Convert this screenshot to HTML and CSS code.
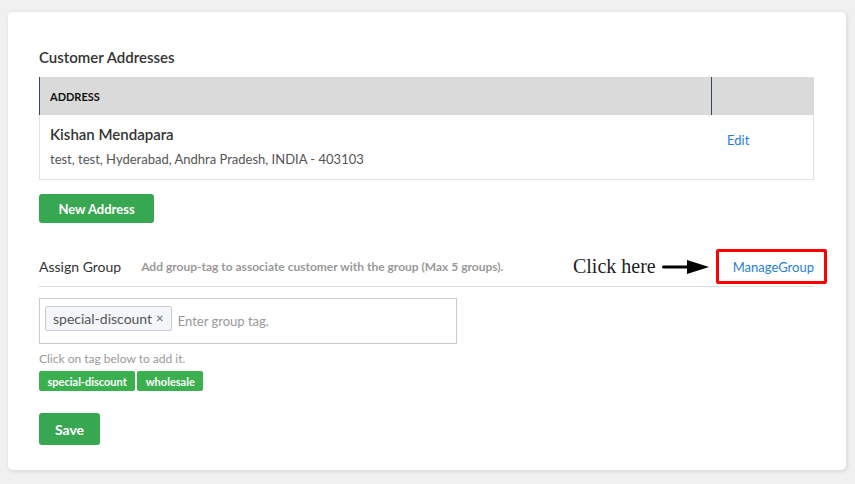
FILE: index.html
```html
<!DOCTYPE html>
<html lang="en">
  <head>
    <meta charset="UTF-8" />
    <meta name="viewport" content="width=device-width, initial-scale=1.0" />
    <title>Customer</title>
    <link rel="stylesheet" href="styles.css">
  </head>
  <body>
    <div class="card">
      <h2 class="section-title">Customer Addresses</h2>

      <table class="address-table">
        <thead>
          <tr>
            <th class="col-address">ADDRESS</th>
            <th class="col-action"></th>
          </tr>
        </thead>
        <tbody>
          <tr>
            <td>
              <div class="address-name">Kishan Mendapara</div>
              <div class="address-line">test, test, Hyderabad, Andhra Pradesh, INDIA - 403103</div>
            </td>
            <td class="col-action"><a href="#" class="link">Edit</a></td>
          </tr>
        </tbody>
      </table>

      <button class="btn btn-new">New Address</button>

      <!-- グループ割り当て -->
      <div class="group-row">
        <span class="group-label">Assign Group</span>
        <span class="group-hint">Add group-tag to associate customer with the group (Max 5 groups).</span>
        <span class="spacer"></span>
        <span class="click-note">Click here</span>
        <svg class="arrow" width="47" height="14" viewBox="0 0 47 14">
          <rect x="0" y="5.5" width="27" height="3" rx="1.5" fill="#000" />
          <polygon points="25,0 47,7 25,14" fill="#000" />
        </svg>
        <span class="highlight-box"><a href="#" class="link">ManageGroup</a></span>
      </div>

      <div class="tag-input">
        <span class="chip">special-discount <span class="chip-x">×</span></span>
        <span class="placeholder">Enter group tag.</span>
      </div>

      <div class="tag-help">Click on tag below to add it.</div>
      <div class="tag-list">
        <span class="tag">special-discount</span>
        <span class="tag">wholesale</span>
      </div>

      <button class="btn btn-save">Save</button>
    </div>
  </body>
</html>
```

FILE: styles.css
```css
body {
  font-family: 'Lato', 'Liberation Sans', sans-serif;
  margin: 0;
  padding: 12px 9px 14px 8px;
  background-color: #f0f0f0;
  color: #333;
}

.card {
  background-color: white;
  border-radius: 5px;
  box-shadow: 1px 1px 4px rgba(0, 0, 0, 0.12);
  padding: 36px 32px 25px 31px;
}

.section-title {
  margin: 0 0 11px;
  font-size: 15px;
  line-height: 18px;
  font-weight: 600;
  color: #333;
}

/* アドレステーブル */
.address-table {
  width: 100%;
  border-collapse: collapse;
}

.address-table th {
  height: 38px;
  padding: 0 10px;
  background-color: #dadada;
  text-align: left;
  font-size: 11px;
  font-weight: 700;
  color: #111;
}

.address-table th.col-address {
  border-left: 1px solid #34495e;
  border-right: 1px solid #34495e;
}

.address-table th.col-action {
  width: 82px;
}

.address-table td {
  padding: 9px 10px 10px;
  border-bottom: 1px solid #e2e2e2;
  vertical-align: middle;
}

.address-table td:first-child {
  border-left: 1px solid #e2e2e2;
}

.address-table td.col-action {
  border-right: 1px solid #e2e2e2;
  padding-top: 14px;
  padding-left: 16px;
  vertical-align: top;
}

.address-name {
  font-size: 15px;
  line-height: 20px;
  font-weight: 600;
  color: #333;
  margin-bottom: 5px;
}

.address-line {
  font-size: 13px;
  line-height: 20px;
  color: #555;
}

.link {
  color: #1f7fd2;
  font-size: 13px;
  text-decoration: none;
}

.btn {
  display: block;
  border: none;
  border-radius: 3px;
  background-color: #38a751;
  color: white;
  font-family: inherit;
  font-weight: 700;
  cursor: pointer;
}

.btn-new {
  margin-top: 14px;
  width: 115px;
  height: 29px;
  font-size: 13px;
}

/* グループ */
.group-row {
  display: flex;
  align-items: center;
  height: 39px;
  margin-top: 24px;
  border-bottom: 1px solid #dedede;
}

.group-label {
  font-size: 14px;
  color: #333;
}

.group-hint {
  margin-left: 20px;
  font-size: 12px;
  font-weight: 700;
  color: #999;
}

.spacer {
  flex: 1;
}

.click-note {
  font-family: 'Liberation Serif', serif;
  font-size: 20px;
  color: #222;
}

.arrow {
  margin-left: 6px;
}

.highlight-box {
  display: flex;
  align-items: center;
  box-sizing: border-box;
  height: 35px;
  margin-left: 7px;
  margin-right: -13px;
  padding: 0 10px 0 14px;
  border: 3px solid #ff0000;
  border-radius: 2px;
}

.tag-input {
  display: flex;
  align-items: center;
  box-sizing: border-box;
  width: 418px;
  height: 46px;
  margin-top: 11px;
  padding: 0 5px;
  border: 1px solid #cccccc;
}

.chip {
  display: inline-flex;
  align-items: center;
  height: 25px;
  box-sizing: border-box;
  padding: 0 7px;
  background-color: #f4f6f9;
  border: 1px solid #c8ccd2;
  border-radius: 2px;
  font-size: 14px;
  color: #555;
  margin-top: -6px;
}

.chip-x {
  margin-left: 4px;
  font-size: 13px;
  color: #666;
}

.placeholder {
  margin-left: 6px;
  font-size: 13px;
  color: #999;
}

.tag-help {
  margin-top: 7px;
  font-size: 12px;
  line-height: 16px;
  color: #999;
}

.tag-list {
  display: flex;
  gap: 2px;
  margin-top: 4px;
}

.tag {
  display: inline-flex;
  align-items: center;
  height: 20px;
  padding: 0 8.5px;
  border-radius: 2px;
  background-color: #3bb04f;
  color: white;
  font-size: 11px;
  font-weight: 700;
}

.btn-save {
  margin-top: 22px;
  width: 61px;
  height: 32px;
  font-size: 14px;
}
```
